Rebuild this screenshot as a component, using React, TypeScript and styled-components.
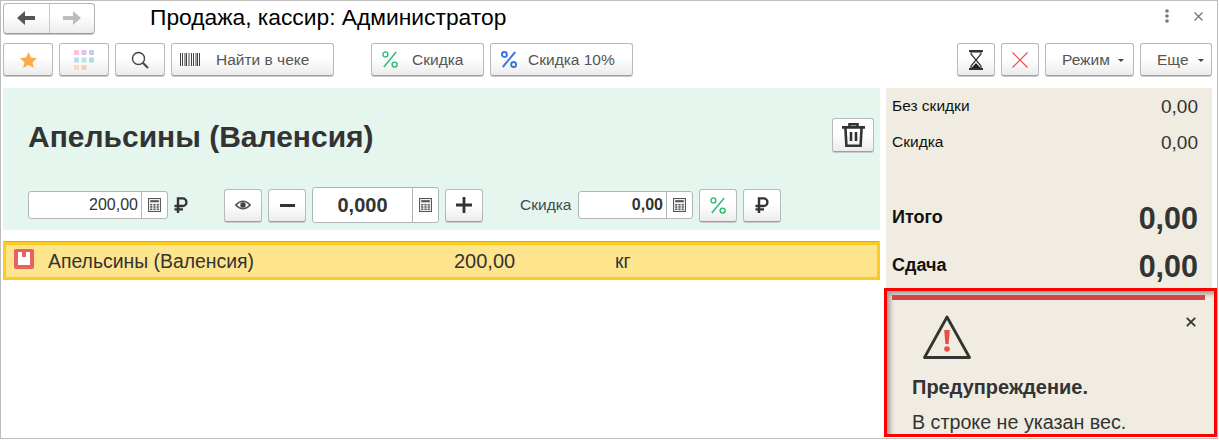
import React from "react";
import styled, { createGlobalStyle } from "styled-components";

const Global = createGlobalStyle`
  html, body { margin: 0; padding: 0; background: #fff; }
  body { font-family: "Liberation Sans", Arial, sans-serif; color: #333; overflow: hidden; }
  * { box-sizing: border-box; }
`;

const Window = styled.div`
  width: 1218px;
  height: 439px;
  border: 1px solid #bdbdbd;
  padding: 0 5px 0 2px;
  overflow: hidden;
`;

const Header = styled.div`
  display: flex;
  align-items: center;
  height: 33px;
  padding-top: 1px;
`;

const NavGroup = styled.div`
  display: flex;
  width: 92px;
  height: 31px;
  border: 1px solid #b4b4b4;
  border-bottom-color: #9c9c9c;
  border-radius: 4px;
  background: linear-gradient(#fff 40%, #ececec);
  box-shadow: 0 1px 0 #c8c8c8;
`;

const NavCell = styled.div<{ $first?: boolean }>`
  flex: 1;
  display: flex;
  align-items: center;
  justify-content: center;
  border-right: ${(p) => (p.$first ? "1px solid #c9c9c9" : "none")};
`;

const Title = styled.div`
  margin: -2px 0 0 55px;
  font-size: 22.8px;
  color: #000;
  white-space: nowrap;
`;

const HeaderTools = styled.div`
  margin-left: auto;
  display: flex;
  align-items: center;
  gap: 25px;
  padding-right: 9px;
  margin-top: -4px;
`;

const Toolbar = styled.div`
  display: flex;
  align-items: center;
  height: 33px;
  margin-top: 9px;
  gap: 6px;
`;

const Btn = styled.div<{ $w: number; $h?: number; $pad?: number; $gap?: number }>`
  width: ${(p) => p.$w}px;
  height: ${(p) => p.$h ?? 33}px;
  flex: none;
  display: flex;
  align-items: center;
  justify-content: ${(p) => (p.$pad ? "flex-start" : "center")};
  padding-left: ${(p) => p.$pad ?? 0}px;
  gap: ${(p) => p.$gap ?? 14}px;
  font-size: 15.5px;
  color: #555;
  border: 1px solid #b9b9b9;
  border-bottom-color: #a0a0a0;
  border-radius: 3px;
  background: linear-gradient(#fff 45%, #ececec);
  box-shadow: 0 1px 0 #c9c9c9;
  white-space: nowrap;
`;

const Spacer = styled.div<{ $w?: number }>`
  ${(p) => (p.$w ? `width: ${p.$w}px; flex: none;` : "flex: 1;")}
`;

const Arrow = styled.span`
  width: 0;
  height: 0;
  border-left: 3px solid transparent;
  border-right: 3px solid transparent;
  border-top: 3px solid #444;
  margin-top: 2px;
`;

const Main = styled.div`
  display: grid;
  grid-template-columns: 877px 326px;
  column-gap: 6px;
  margin-top: 12px;
`;

const Left = styled.div`
  display: flex;
  flex-direction: column;
`;

const ItemCard = styled.div`
  height: 142px;
  background: #e5f6ef;
  display: flex;
  flex-direction: column;
  padding: 30px 6px 0 25px;
`;

const ItemHead = styled.div`
  display: flex;
  justify-content: space-between;
  align-items: flex-start;
  height: 69px;
`;

const ItemName = styled.div`
  font-size: 30px;
  font-weight: 700;
  line-height: 38px;
  color: #333;
`;

const Controls = styled.div`
  display: flex;
  align-items: center;
  height: 36px;
  gap: 6px;
`;

const Field = styled.div<{ $w: number; $h: number; $split: number }>`
  width: ${(p) => p.$w}px;
  height: ${(p) => p.$h}px;
  flex: none;
  display: grid;
  grid-template-columns: 1fr ${(p) => p.$split}px;
  background: #fff;
  border: 1px solid #b4b4b4;
  border-radius: 3px;
`;

const FieldValue = styled.div<{ $size: number; $bold?: boolean; $center?: boolean }>`
  display: flex;
  align-items: center;
  justify-content: ${(p) => (p.$center ? "center" : "flex-end")};
  padding-right: ${(p) => (p.$center ? 0 : 3)}px;
  font-size: ${(p) => p.$size}px;
  font-weight: ${(p) => (p.$bold ? 700 : 400)};
  color: #333;
`;

const FieldCalc = styled.div`
  display: flex;
  align-items: center;
  justify-content: center;
  border-left: 1px solid #b4b4b4;
`;

const DiscountLabel = styled.div`
  font-size: 15.5px;
  color: #3f4a50;
  width: 52px;
  flex: none;
`;

const List = styled.div`
  margin-top: 11px;
`;

const ListRow = styled.div`
  height: 39px;
  display: flex;
  align-items: center;
  padding-left: 8px;
  background: #fee48d;
  border: 3px solid #fccb1f;
  border-top: 1px solid #a8a8a8;
  box-shadow: inset 0 3px 0 #fccb1f;
  color: #333;
`;

const RowIcon = styled.svg`
  flex: none;
  margin-top: -2px;
`;

const Cell = styled.div<{ $w: number; $size: number; $left?: number }>`
  width: ${(p) => p.$w}px;
  flex: none;
  margin: 3px 0 0 ${(p) => p.$left ?? 0}px;
  font-size: ${(p) => p.$size}px;
  white-space: nowrap;
`;

const Side = styled.div`
  display: flex;
  flex-direction: column;
`;

const Totals = styled.div`
  height: 200px;
  background: #f0ece1;
  padding: 1px 14px 0 6px;
  display: flex;
  flex-direction: column;
`;

const TotalRow = styled.div<{ $h: number; $big?: boolean }>`
  height: ${(p) => p.$h}px;
  flex: none;
  display: flex;
  justify-content: space-between;
  align-items: center;
  font-size: ${(p) => (p.$big ? 18 : 15.5)}px;
  font-weight: ${(p) => (p.$big ? 700 : 400)};
  color: #111;
`;

const TotalLabel = styled.span`
  margin-top: -2px;
`;

const TotalValue = styled.div<{ $big?: boolean }>`
  font-size: ${(p) => (p.$big ? 30.5 : 19)}px;
  font-weight: ${(p) => (p.$big ? 700 : 400)};
  color: #333;
`;

const Gap = styled.div`
  height: 33px;
  flex: none;
`;

const Warning = styled.div`
  margin-left: -2px;
  margin-right: -5px;
  height: 149px;
  border: 3px solid #fe0000;
  background: #f0ece1;
  box-shadow: inset 5px 5px 5px -2px rgba(0, 0, 0, 0.35);
  display: flex;
  flex-direction: column;
`;

const WarnBar = styled.div`
  height: 5px;
  margin: 4px 9px 0 5px;
  background: #d64545;
  flex: none;
`;

const WarnTop = styled.div`
  display: flex;
  justify-content: space-between;
  padding: 15px 18px 0 36px;
  height: 60px;
  flex: none;
`;

const WarnClose = styled.svg`
  margin-top: 2px;
`;

const WarnTitle = styled.div`
  margin: 16px 0 0 25px;
  font-size: 20px;
  font-weight: 700;
  color: #333;
`;

const WarnText = styled.div`
  margin: 12px 0 0 25px;
  font-size: 19.7px;
  color: #333;
  white-space: nowrap;
`;

const BackIcon = ({ color }: { color: string }) => (
  <svg width="18" height="14" viewBox="0 0 18 14">
    <path d="M8 0 L8 5 L18 5 L18 9 L8 9 L8 14 L0 7 Z" fill={color} />
  </svg>
);

const PercentIcon = ({ color, w = 2 }: { color: string; w?: number }) => (
  <svg width="16" height="17" viewBox="0 0 16 17" fill="none" stroke={color} strokeWidth={w}>
    <circle cx="3.4" cy="3.4" r="2.5" />
    <circle cx="12.6" cy="13.6" r="2.5" />
    <path d="M14.2 1 L1.8 16" />
  </svg>
);

const Calc = ({ size = 13 }: { size?: number }) => (
  <svg width={size} height={size + 1} viewBox="0 0 12 13">
    <rect x="0.5" y="0.5" width="11" height="12" fill="none" stroke="#555" />
    <rect x="2" y="2" width="8" height="2" fill="#555" />
    {[5.5, 7.6, 9.7].map((y) =>
      [2, 5, 8].map((x) => <rect key={`${x}-${y}`} x={x} y={y} width="2" height="1.5" fill="#555" />)
    )}
  </svg>
);

const RoubleIcon = () => (
  <svg width="14" height="16" viewBox="0 0 14 16" fill="none" stroke="#333" strokeWidth="2.4">
    <path d="M4 16 V1.4 H8.6 a3.8 3.8 0 0 1 0 7.6 H0.5 M0.5 12.4 H9" />
  </svg>
);

const GRID_COLORS = ["#f9c6d8", "#dfc3ec", "#c3cdf0", "#b9dcf8", "#b0e6ea", "#aee0d8", "#fddcb4", "#fbcbb8"];

export default function App() {
  return (
    <>
      <Global />
      <Window>
        <Header>
          <NavGroup>
            <NavCell $first>
              <BackIcon color="#555" />
            </NavCell>
            <NavCell>
              <svg width="18" height="14" viewBox="0 0 18 14">
                <path d="M10 0 L10 5 L0 5 L0 9 L10 9 L10 14 L18 7 Z" fill="#bdbdbd" />
              </svg>
            </NavCell>
          </NavGroup>
          <Title>Продажа, кассир: Администратор</Title>
          <HeaderTools>
            <svg width="4" height="14" viewBox="0 0 4 14" fill="#777">
              <circle cx="2" cy="2" r="1.8" />
              <circle cx="2" cy="7" r="1.8" />
              <circle cx="2" cy="12" r="1.8" />
            </svg>
            <svg width="9" height="9" viewBox="0 0 9 9" stroke="#777" strokeWidth="1.3">
              <path d="M0.5 0.5 L8.5 8.5 M8.5 0.5 L0.5 8.5" />
            </svg>
          </HeaderTools>
        </Header>
        <Toolbar>
          <Btn $w={50}>
            <svg width="17" height="16" viewBox="0 0 17 16">
              <path d="M8.5 0 L11 5.5 L17 6.2 L12.6 10.2 L13.8 16 L8.5 13 L3.2 16 L4.4 10.2 L0 6.2 L6 5.5 Z" fill="#fdab47" />
            </svg>
          </Btn>
          <Btn $w={50}>
            <svg width="20" height="20" viewBox="0 0 20 20">
              {GRID_COLORS.map((c, i) => (
                <rect key={i} x={(i % 3) * 7.5} y={Math.floor(i / 3) * 7.5} width="5" height="5" fill={c} />
              ))}
            </svg>
          </Btn>
          <Btn $w={50}>
            <svg width="18" height="18" viewBox="0 0 18 18" fill="none" stroke="#444" strokeWidth="1.4">
              <circle cx="7.5" cy="7.5" r="6" />
              <path d="M11.8 11.8 L17 17" strokeWidth="2" />
            </svg>
          </Btn>
          <Btn $w={163} $pad={8} $gap={16}>
            <svg width="20" height="13" viewBox="0 0 20 13" stroke="#444">
              <path d="M0.5 0 V13 M2.5 0 V13 M5 0 V13 M6.5 0 V13 M9 0 V13 M11.5 0 V13 M13.5 0 V13 M16 0 V13 M17.5 0 V13 M19.5 0 V13" />
            </svg>
            <span>Найти в чеке</span>
          </Btn>
          <Spacer $w={25} />
          <Btn $w={113} $pad={10} $gap={14}>
            <PercentIcon color="#2db774" w={1.4} />
            <span>Скидка</span>
          </Btn>
          <Btn $w={143} $pad={10} $gap={11}>
            <PercentIcon color="#3d78e0" />
            <span>Скидка 10%</span>
          </Btn>
          <Spacer />
          <Btn $w={38}>
            <svg width="16" height="20" viewBox="0 0 16 20">
              <path d="M1 1 H15 M1 19 H15" stroke="#333" strokeWidth="2" />
              <path d="M3 2 V4 L8 10 L3 16 V18 H13 V16 L8 10 L13 4 V2 Z" fill="none" stroke="#333" strokeWidth="1.2" />
              <path d="M3.5 18 L8 13 L12.5 18 Z" fill="#222" />
            </svg>
          </Btn>
          <Btn $w={38}>
            <svg width="16" height="16" viewBox="0 0 16 16" stroke="#f04a4a" strokeWidth="1.2">
              <path d="M0.5 0.5 L15.5 15.5 M15.5 0.5 L0.5 15.5" />
            </svg>
          </Btn>
          <Btn $w={89} $pad={16} $gap={8}>
            <span>Режим</span>
            <Arrow />
          </Btn>
          <Btn $w={72} $pad={16} $gap={9}>
            <span>Еще</span>
            <Arrow />
          </Btn>
        </Toolbar>
        <Main>
          <Left>
            <ItemCard>
              <ItemHead>
                <ItemName>Апельсины (Валенсия)</ItemName>
                <Btn $w={42} $h={34}>
                  <svg width="23" height="24" viewBox="0 0 23 24" fill="none" stroke="#333" strokeWidth="2.6">
                    <path d="M0 4.4 H23 M7.5 4 V1.3 H15.5 V4 M3.4 4.4 L4.4 22.7 H18.6 L19.6 4.4 M9 9 V18 M14 9 V18" />
                  </svg>
                </Btn>
              </ItemHead>
              <Controls>
                <Field $w={140} $h={28} $split={26}>
                  <FieldValue $size={16}>200,00</FieldValue>
                  <FieldCalc>
                    <Calc />
                  </FieldCalc>
                </Field>
                <RoubleIcon />
                <Spacer $w={24} />
                <Btn $w={38}>
                  <svg width="16" height="10" viewBox="0 0 16 10">
                    <path d="M0.8 5 Q8 -2.5 15.2 5 Q8 12.5 0.8 5 Z" fill="none" stroke="#555" strokeWidth="1.7" />
                    <circle cx="8" cy="5" r="2.7" fill="#444" />
                  </svg>
                </Btn>
                <Btn $w={38}>
                  <svg width="15" height="3" viewBox="0 0 15 3">
                    <rect width="15" height="3" fill="#333" />
                  </svg>
                </Btn>
                <Field $w={127} $h={36} $split={26}>
                  <FieldValue $size={20} $bold $center>
                    0,000
                  </FieldValue>
                  <FieldCalc>
                    <Calc />
                  </FieldCalc>
                </Field>
                <Btn $w={38}>
                  <svg width="16" height="16" viewBox="0 0 16 16">
                    <path d="M6.6 0 H9.4 V6.6 H16 V9.4 H9.4 V16 H6.6 V9.4 H0 V6.6 H6.6 Z" fill="#333" />
                  </svg>
                </Btn>
                <Spacer $w={25} />
                <DiscountLabel>Скидка</DiscountLabel>
                <Field $w={115} $h={28} $split={26}>
                  <FieldValue $size={16} $bold>
                    0,00
                  </FieldValue>
                  <FieldCalc>
                    <Calc />
                  </FieldCalc>
                </Field>
                <Btn $w={38}>
                  <PercentIcon color="#2db774" w={1.4} />
                </Btn>
                <Btn $w={38}>
                  <RoubleIcon />
                </Btn>
              </Controls>
            </ItemCard>
            <List>
              <ListRow>
                <RowIcon width="20" height="20" viewBox="0 0 20 20">
                  <rect width="20" height="20" rx="2" fill="#e8615f" />
                  <path d="M4 3 H8 V8 H12 V3 H16 V16 H4 Z" fill="#fff" />
                </RowIcon>
                <Cell $w={406} $size={19.4} $left={14}>
                  Апельсины (Валенсия)
                </Cell>
                <Cell $w={161} $size={20}>
                  200,00
                </Cell>
                <Cell $w={60} $size={19.4}>
                  кг
                </Cell>
              </ListRow>
            </List>
          </Left>
          <Side>
            <Totals>
              <TotalRow $h={36}>
                <TotalLabel>Без скидки</TotalLabel>
                <TotalValue>0,00</TotalValue>
              </TotalRow>
              <TotalRow $h={36}>
                <TotalLabel>Скидка</TotalLabel>
                <TotalValue>0,00</TotalValue>
              </TotalRow>
              <Gap />
              <TotalRow $big $h={48}>
                <TotalLabel>Итого</TotalLabel>
                <TotalValue $big>0,00</TotalValue>
              </TotalRow>
              <TotalRow $big $h={48}>
                <TotalLabel>Сдача</TotalLabel>
                <TotalValue $big>0,00</TotalValue>
              </TotalRow>
            </Totals>
            <Warning>
              <WarnBar />
              <WarnTop>
                <svg width="48" height="45" viewBox="0 0 48 45">
                  <path d="M24 2 L46.5 42.5 H1.5 Z" fill="none" stroke="#333" strokeWidth="2.8" strokeLinejoin="round" />
                  <path d="M21.2 15 H26.8 L25.6 29 H22.4 Z" fill="#ef4a4a" />
                  <circle cx="24" cy="34" r="2.8" fill="#ef4a4a" />
                </svg>
                <WarnClose width="10" height="10" viewBox="0 0 10 10" stroke="#333" strokeWidth="1.8">
                  <path d="M0.8 0.8 L9.2 9.2 M9.2 0.8 L0.8 9.2" />
                </WarnClose>
              </WarnTop>
              <WarnTitle>Предупреждение.</WarnTitle>
              <WarnText>В строке не указан вес.</WarnText>
            </Warning>
          </Side>
        </Main>
      </Window>
    </>
  );
}
